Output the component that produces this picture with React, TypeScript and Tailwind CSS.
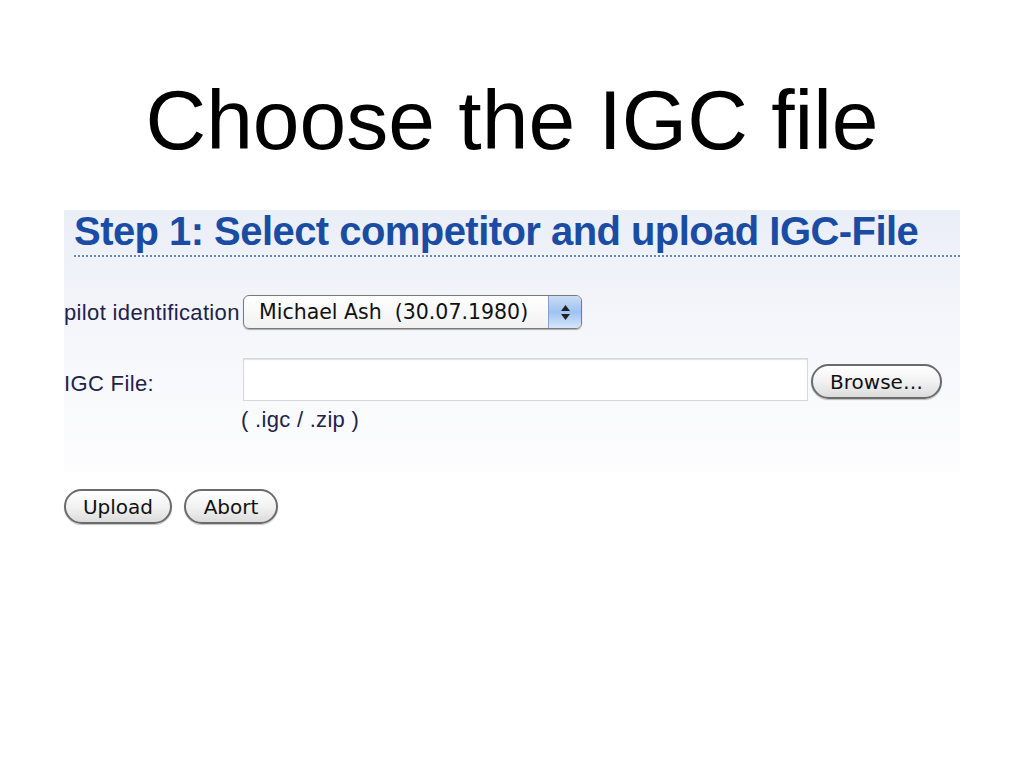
function PillButton({ label, className }: { label: string; className: string }) {
  return (
    <button
      className={`h-[35px] rounded-full border-2 border-[#6b6b6b] bg-gradient-to-b from-white via-[#f2f2f2] to-[#dcdcdc] text-[20px] text-[#111] shadow-[0_1px_1px_rgba(0,0,0,0.25)] [font-family:'DejaVu_Sans',sans-serif] ${className}`}
    >
      {label}
    </button>
  );
}

export default function App() {
  return (
    <div className="w-[1024px] h-[768px] bg-white [font-family:'Liberation_Sans',Arial,sans-serif]">
      {/* Slide title */}
      <h1 className="pt-[72px] text-center text-[84px] leading-[96px] text-black">
        Choose the IGC file
      </h1>

      {/* Form panel */}
      <div className="mt-[42px] ml-[64px] w-[896px] h-[262px] bg-gradient-to-b from-[#eaeef7] via-[#f6f7fb] to-[#fdfdfe]">
        <div className="pl-[10px]">
          <h2 className="text-[40px] leading-[42px] font-bold text-[#1a4ca3] tracking-[-0.55px]">
            Step 1: Select competitor and upload IGC-File
          </h2>
        </div>
        <div className="mt-[3px] ml-[10px] border-b-2 border-dotted border-[#6f86c4]"></div>

        {/* Pilot row */}
        <div className="mt-[38px] flex items-center">
          <span className="w-[179px] text-[22px] tracking-[0.35px] text-[#22224a]">pilot identification</span>
          <div className="flex h-[34px] w-[339px] items-stretch rounded-[6px] border border-[#7a7a7a] bg-gradient-to-b from-white to-[#f1f1f1] shadow-[0_1px_1px_rgba(0,0,0,0.3)]">
            <span className="flex-1 pl-[15px] text-[20.5px] leading-[32px] text-[#111] [font-family:'DejaVu_Sans',sans-serif]">
              Michael Ash&nbsp; (30.07.1980)
            </span>
            <span className="flex w-[33px] flex-col items-center justify-center gap-[3px] rounded-r-[5px] border-l border-[#8aa0c8] bg-gradient-to-b from-[#c9dcf5] via-[#9ec3ef] to-[#d6e6fa]">
              <svg width="9" height="6" viewBox="0 0 9 6">
                <path d="M4.5 0 L9 6 L0 6 Z" fill="#222" />
              </svg>
              <svg width="9" height="6" viewBox="0 0 9 6">
                <path d="M0 0 L9 0 L4.5 6 Z" fill="#222" />
              </svg>
            </span>
          </div>
        </div>

        {/* IGC file row */}
        <div className="mt-[29px] flex items-start">
          <span className="w-[179px] pt-[9px] text-[22px] tracking-[0.35px] text-[#22224a]">IGC File:</span>
          <div>
            <div className="flex items-center">
              <div className="h-[43px] w-[565px] border border-[#d8d8d8] bg-white shadow-[inset_0_1px_1px_rgba(0,0,0,0.12)]"></div>
              <PillButton label="Browse…" className="ml-[3px] mt-[4px] w-[131px]" />
            </div>
            <div className="mt-[2px] -ml-[2px] text-[22px] tracking-[0.3px] text-[#22224a]">( .igc / .zip )</div>
          </div>
        </div>
      </div>

      {/* Action buttons */}
      <div className="mt-[17px] ml-[64px] flex gap-[12px]">
        <PillButton label="Upload" className="w-[108px]" />
        <PillButton label="Abort" className="w-[94px]" />
      </div>
    </div>
  );
}
